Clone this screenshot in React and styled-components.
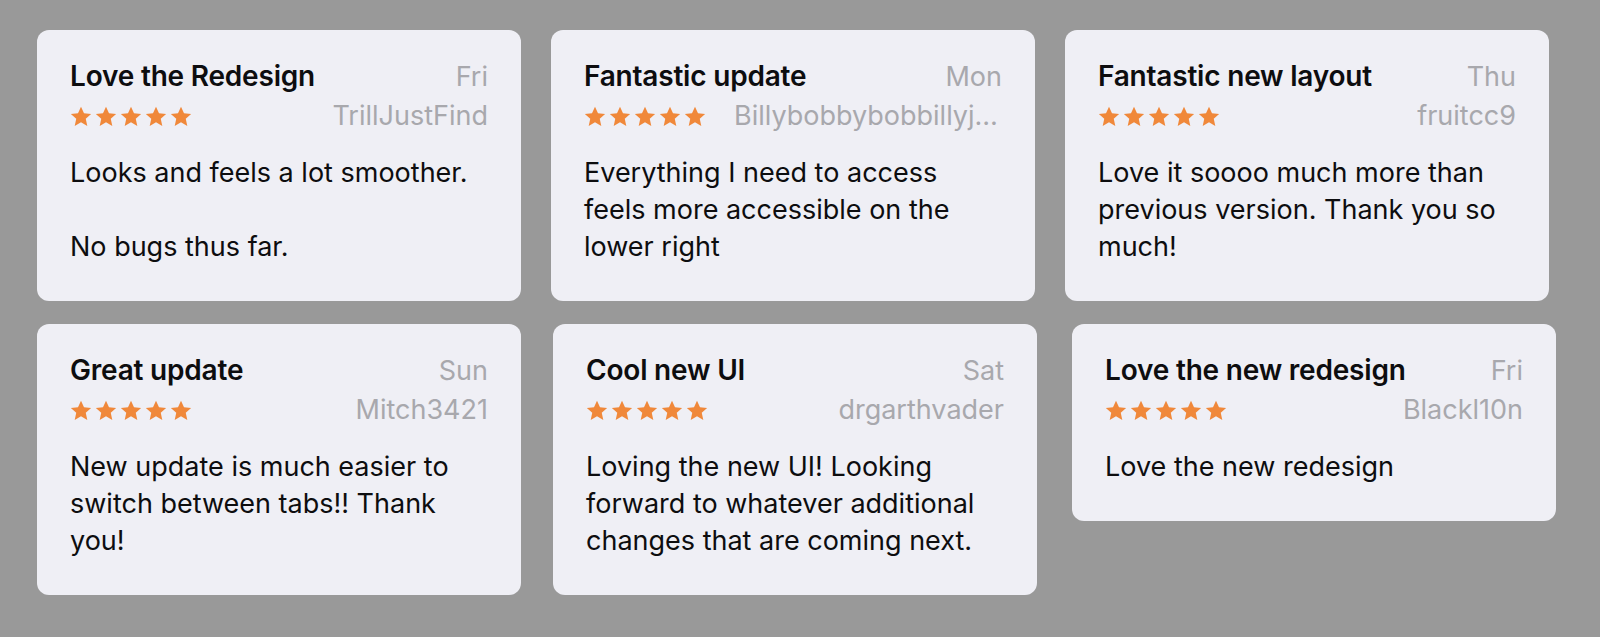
import React from 'react'
import styled, { createGlobalStyle } from 'styled-components'

const reviews = [
  { title: 'Love the Redesign', day: 'Fri', user: 'TrillJustFind', body: ['Looks and feels a lot smoother.', '', 'No bugs thus far.'] },
  { title: 'Fantastic update', day: 'Mon', user: 'Billybobbybobbillyjoe', body: ['Everything I need to access feels more accessible on the lower right'] },
  { title: 'Fantastic new layout', day: 'Thu', user: 'fruitcc9', body: ['Love it soooo much more than previous version. Thank you so much!'] },
  { title: 'Great update', day: 'Sun', user: 'Mitch3421', body: ['New update is much easier to switch between tabs!! Thank you!'] },
  { title: 'Cool new UI', day: 'Sat', user: 'drgarthvader', body: ['Loving the new UI! Looking forward to whatever additional changes that are coming next.'], shift: 2 },
  { title: 'Love the new redesign', day: 'Fri', user: 'Blackl10n', body: ['Love the new redesign'], shift: 7 },
]

const Star = () => (
  <svg width="22" height="21" viewBox="0 0 24 23">
    <path
      d="M12 0.8l3.3 7.2 7.8 0.8-5.9 5.3 1.7 7.7L12 17.8l-6.9 4 1.7-7.7L0.9 8.8l7.8-0.8z"
      fill="#f0883a"
    />
  </svg>
)

const ReviewCard = ({ review }) => (
  <Card $shift={review.shift}>
    <TopRow>
      <Title>{review.title}</Title>
      <Meta>{review.day}</Meta>
    </TopRow>
    <MidRow>
      <Stars>
        {[0, 1, 2, 3, 4].map(i => <Star key={i} />)}
      </Stars>
      <User title={review.user}>{review.user}</User>
    </MidRow>
    <Body>
      {review.body.map((line, i) => (
        <Para key={i}>{line || '\u00a0'}</Para>
      ))}
    </Body>
  </Card>
)

const App = () => {
  return (
    <>
      <GlobalStyle />
      <Page>
        <Grid>
          {reviews.map((r, i) => <ReviewCard key={i} review={r} />)}
        </Grid>
      </Page>
    </>
  )
}

export default App

const GlobalStyle = createGlobalStyle`
  html, body {
    margin: 0;
    padding: 0;
    background: #999999;
  }
  body {
    font-family: Inter, "Liberation Sans", sans-serif;
  }
`
const Page = styled.div`
  width: 1600px;
  height: 637px;
  background: #999999;
  padding: 30px 0 0 37px;
  box-sizing: border-box;
`
const Grid = styled.div`
  display: grid;
  grid-template-columns: repeat(3, 484px);
  column-gap: 30px;
  row-gap: 23px;
  align-items: start;
`
const Card = styled.div`
  background: #efeff5;
  border-radius: 12px;
  padding: 30px 33px 36px;
  margin: 0 -${p => p.$shift || 0}px 0 ${p => p.$shift || 0}px;
  min-width: 0;
`
const TopRow = styled.div`
  display: flex;
  justify-content: space-between;
  align-items: baseline;
  height: 32px;
`
const Title = styled.div`
  font-size: 28px;
  line-height: 32px;
  font-weight: 600;
  color: #0d0d0f;
  letter-spacing: -0.2px;
`
const Meta = styled.div`
  font-size: 27px;
  line-height: 32px;
  color: #a8a8ad;
`
const MidRow = styled.div`
  display: flex;
  align-items: center;
  gap: 18px;
  height: 38px;
  margin-top: 5px;
`
const Stars = styled.div`
  display: flex;
  gap: 3px;
  flex: none;
`
const User = styled(Meta)`
  margin-left: auto;
  max-width: 268px;
  white-space: nowrap;
  overflow: hidden;
  text-overflow: ellipsis;
  min-width: 0;
`
const Body = styled.div`
  margin-top: 19px;
  padding-right: 8px;
`
const Para = styled.p`
  margin: 0;
  font-size: 27px;
  line-height: 37px;
  color: #0d0d0f;
`
